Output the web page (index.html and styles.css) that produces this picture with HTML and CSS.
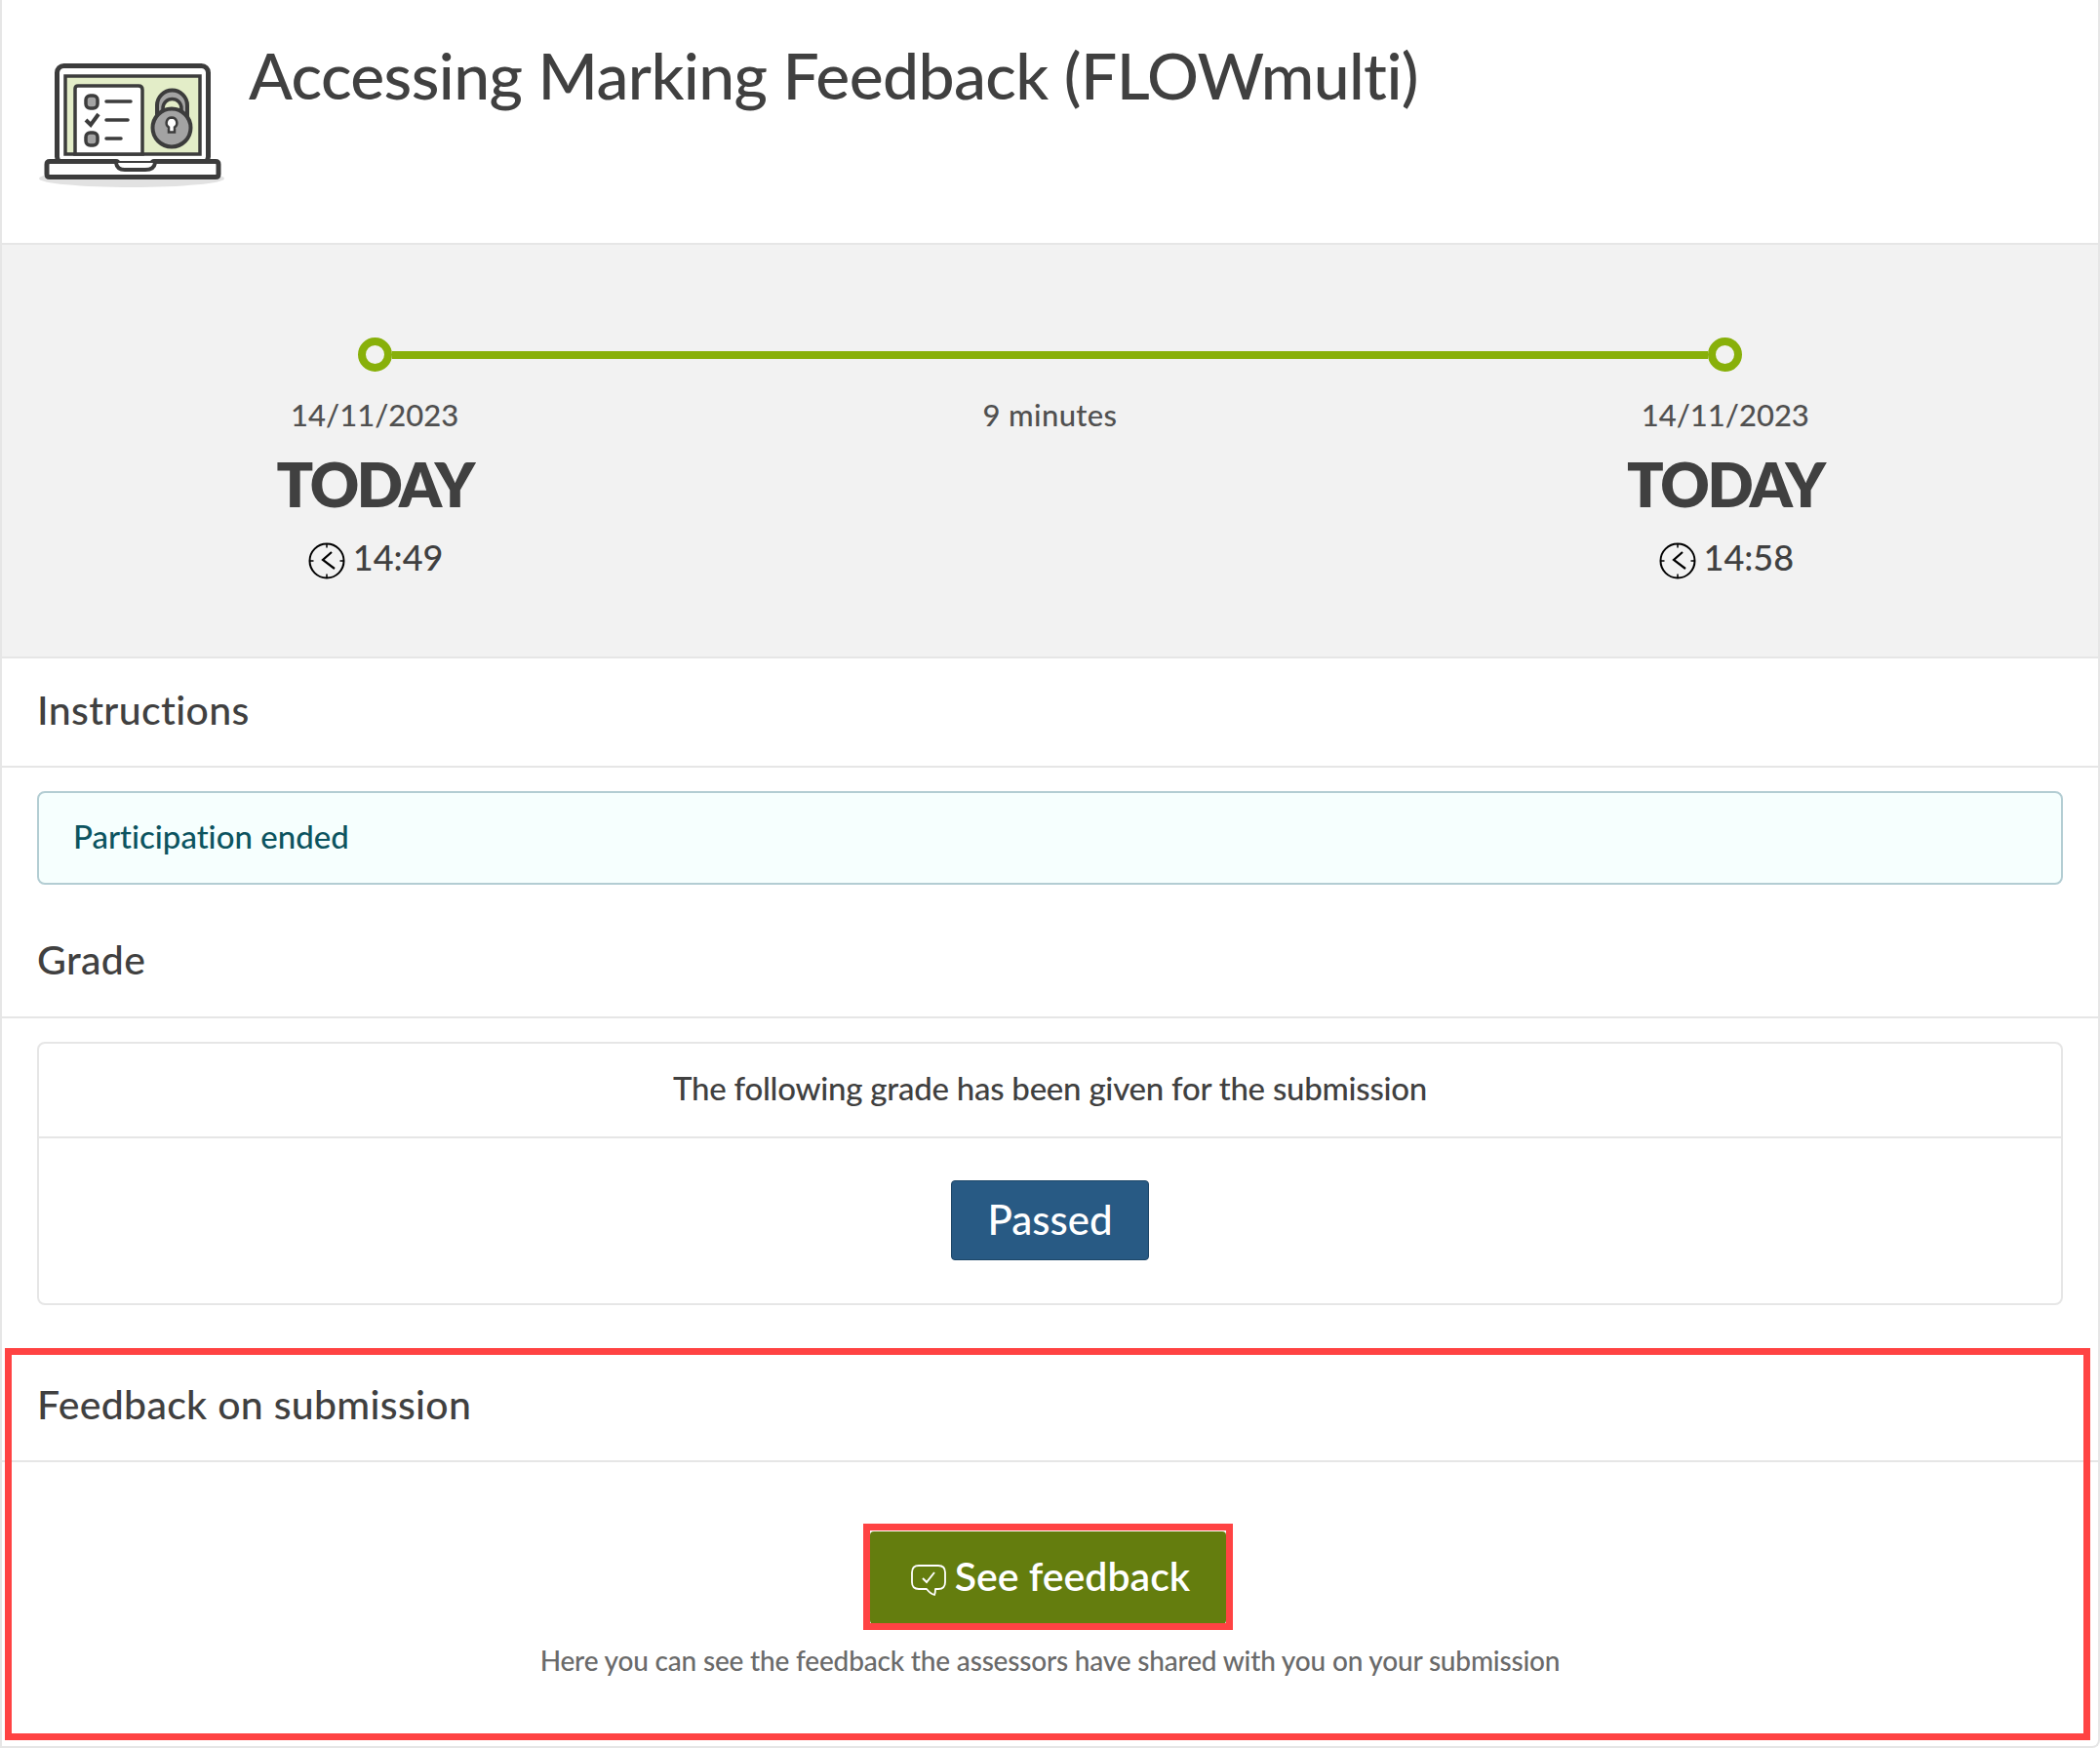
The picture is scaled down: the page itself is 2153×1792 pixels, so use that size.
FILE: index.html
```html
<!DOCTYPE html>
<html lang="en">
<head>
<meta charset="utf-8">
<title>Accessing Marking Feedback (FLOWmulti)</title>
<link rel="stylesheet" href="styles.css">
</head>
<body>
<main class="page">
  <header class="head">
    <svg class="head-icon" viewBox="40 60 190 135" width="190" height="135" aria-hidden="true">
      <ellipse cx="135" cy="183" rx="95" ry="9" fill="#e2e2e2"/>
      <rect x="58.500" y="67.500" width="155" height="100" rx="7" fill="#fff" stroke="#3c3c3c" stroke-width="5"/>
      <rect x="67" y="78" width="138" height="80" fill="#e3edc8" stroke="#3c3c3c" stroke-width="3.500"/>
      <path d="M77 158V91q0-3 3-3h62q4 0 4 4v66z" fill="#fff" stroke="#3c3c3c" stroke-width="3.500"/>
      <rect x="88" y="98" width="12" height="13" rx="4.500" fill="#a3a3a3" stroke="#3c3c3c" stroke-width="3.500"/>
      <rect x="88" y="136" width="12" height="13" rx="4.500" fill="#a3a3a3" stroke="#3c3c3c" stroke-width="3.500"/>
      <path d="M88 123l5 5 8-11" fill="none" stroke="#3c3c3c" stroke-width="4"/>
      <path d="M109 104h25M109 123h22M109 142h15" fill="none" stroke="#3c3c3c" stroke-width="3.500" stroke-linecap="round"/>
      <path d="M161 120V108a15.500 15.500 0 0 1 31 0v12z" fill="#a3a3a3" stroke="#3c3c3c" stroke-width="4"/>
      <path d="M167 114v-3a9.500 9.500 0 0 1 19 0v3z" fill="#e3edc8" stroke="#3c3c3c" stroke-width="3.500"/>
      <circle cx="176" cy="131" r="19.500" fill="#a3a3a3" stroke="#3c3c3c" stroke-width="4"/>
      <path d="M176 120.500a5.500 5.500 0 0 1 3 10v5h-6v-5a5.500 5.500 0 0 1 3-10z" fill="#fff" stroke="#3c3c3c" stroke-width="2.500"/>
      <path d="M51 165.500h68q2 0 3 3.500h33q1-3.500 3-3.500h63q3 0 3 3v10q0 3-3 3H51q-3 0-3-3v-10q0-3 3-3z" fill="#fff" stroke="#3c3c3c" stroke-width="5"/>
      <path d="M119 167q1 7 9 7h21q9 0 10-7" fill="#fff" stroke="#3c3c3c" stroke-width="4"/>
    </svg>
    <h1 class="title">Accessing Marking Feedback (FLOWmulti)</h1>
  </header>

  <section class="timeline">
    <div class="track">
      <span class="ring"></span>
      <span class="track-line"></span>
      <span class="ring"></span>
    </div>
    <div class="stamps">
      <div class="stamp">
        <div class="stamp-date">14/11/2023</div>
        <div class="stamp-day">TODAY</div>
        <div class="stamp-time">
          <svg class="clock" viewBox="0 0 38 38" width="38" height="38" aria-hidden="true"><use href="#clock-shape"/></svg>
          <span>14:49</span>
        </div>
      </div>
      <div class="stamp"><div class="stamp-date stamp-date-mid">9 minutes</div></div>
      <div class="stamp">
        <div class="stamp-date">14/11/2023</div>
        <div class="stamp-day">TODAY</div>
        <div class="stamp-time">
          <svg class="clock" viewBox="0 0 38 38" width="38" height="38" aria-hidden="true"><use href="#clock-shape"/></svg>
          <span>14:58</span>
        </div>
      </div>
    </div>
  </section>

  <h2 class="section-title section-title-first">Instructions</h2>
  <div class="section-body section-body-alert">
    <div class="alert">Participation ended</div>
  </div>

  <h2 class="section-title section-title-tight">Grade</h2>
  <div class="section-body section-body-card">
    <div class="card">
      <div class="card-head">The following grade has been given for the submission</div>
      <div class="card-body"><span class="badge">Passed</span></div>
    </div>
  </div>

  <h2 class="section-title section-title-feedback">Feedback on submission</h2>
  <div class="feedback">
    <a class="see-btn" href="#">
      <svg viewBox="0 0 38 34" width="38" height="34" aria-hidden="true">
        <path d="M9 2h20q7 0 7 7v10q0 7-7 7h-3q0 4 -1 6q-4-1-8-6H9q-7 0-7-7V9q0-7 7-7z" fill="none" stroke="#fff" stroke-width="1.800" stroke-linejoin="round"/>
        <path d="M13 15l4 4 8-10" fill="none" stroke="#fff" stroke-width="2"/>
      </svg>
      <span>See feedback</span>
    </a>
    <p class="help">Here you can see the feedback the assessors have shared with you on your submission</p>
  </div>

  <div class="mark mark-section"></div>
  <div class="mark mark-button"></div>
</main>
<svg class="defs" width="0" height="0" aria-hidden="true">
  <symbol id="clock-shape" viewBox="0 0 38 38">
    <circle cx="19" cy="19" r="17.500" fill="none" stroke="#000" stroke-width="2"/>
    <path d="M19 1.500v4M19 32.500v4M1.500 19h4M32.500 19h4" stroke="#000" stroke-width="1.500"/>
    <path d="M24 10l-9 8 12 9" fill="none" stroke="#000" stroke-width="2.200"/>
  </symbol>
</svg>
</body>
</html>
```
FILE: styles.css
```css
* { box-sizing: border-box; }
html, body { margin: 0; padding: 0; background: #fff; }
body {
  font-family: "Lato", "Noto Sans", sans-serif;
  font-variant-ligatures: none;
  color: #404040;
}
.page {
  position: relative;
  width: 2153px;
  height: 1792px;
  border: solid #e6e6e6;
  border-width: 0 2px 2px 2px;
  border-bottom-right-radius: 8px;
  overflow: hidden;
}
.defs { position: absolute; }

.head {
  display: flex;
  align-items: flex-start;
  height: 251px;
  padding: 60px 0 0 38px;
  border-bottom: 2px solid #e6e6e6;
}
.head-icon { flex: none; }
.title {
  margin: -33px 0 0 25px;
  font-size: 66px;
  line-height: 100px;
  font-weight: 500;
  letter-spacing: -0.6px;
}

.timeline {
  height: 424px;
  padding: 0 36px;
  background: #f2f2f2;
  border-bottom: 2px solid #e6e6e6;
}
.track {
  display: flex;
  align-items: center;
  padding: 95px 329px 0;
}
.ring {
  flex: none;
  width: 35px;
  height: 35px;
  border: 8px solid #88b00a;
  border-radius: 50%;
}
.track-line { flex: 1; height: 8px; background: #88b00a; }
.stamps {
  display: grid;
  grid-template-columns: repeat(3, 1fr);
  margin-top: 22px;
}
.stamp { text-align: center; }
.stamp-date { font-size: 31px; line-height: 44px; color: #505050; font-weight: 500; }
.stamp-date-mid { letter-spacing: 0.35px; }
.stamp-day {
  font-size: 62px;
  line-height: 92px;
  font-weight: 800;
  letter-spacing: -2.4px;
  margin-top: 3px;
}
.stamp-time {
  display: flex;
  justify-content: center;
  align-items: center;
  gap: 8px;
  padding-left: 2px;
  font-size: 36px;
  line-height: 58px;
  font-weight: 500;
}
.clock { position: relative; top: 4px; }

.section-title {
  margin: 0;
  height: 112px;
  padding: 28px 36px 0;
  font-size: 41px;
  line-height: 50px;
  font-weight: 500;
  letter-spacing: 0.35px;
  border-bottom: 2px solid #e6e6e6;
}
.section-title-tight { padding-top: 27px; }
.section-title-feedback { height: 116px; padding-top: 32px; letter-spacing: 0.3px; }

.section-body { padding: 24px 36px 0; }
.section-body-alert { height: 145px; }
.section-body-card { height: 339px; }
.alert {
  height: 96px;
  padding: 0 35px;
  font-size: 33px;
  line-height: 88px;
  font-weight: 500;
  color: #0c5460;
  background: #f6fffe;
  border: 2px solid #b3cdd3;
  border-radius: 8px;
}
.card {
  height: 270px;
  border: 2px solid #e6e6e6;
  border-radius: 8px;
}
.card-head {
  height: 97px;
  font-size: 33px;
  line-height: 90px;
  font-weight: 500;
  letter-spacing: -0.25px;
  text-align: center;
  border-bottom: 2px solid #e6e6e6;
}
.card-body { display: flex; justify-content: center; padding-top: 43px; }
.badge {
  width: 203px;
  height: 82px;
  font-size: 42px;
  line-height: 78px;
  font-weight: 500;
  text-align: center;
  color: #fff;
  background: #285a84;
  border: 1px solid #1d4668;
  border-radius: 4px;
}

.feedback {
  display: flex;
  flex-direction: column;
  align-items: center;
  padding-top: 71px;
}
.see-btn {
  display: flex;
  align-items: center;
  justify-content: center;
  gap: 8px;
  width: 365px;
  height: 95px;
  margin-right: 4px;
  padding: 0 0 5px 4px;
  font-size: 41px;
  font-weight: 600;
  color: #fff;
  text-decoration: none;
  background: #647d0e;
  border-radius: 4px;
}
.see-btn svg { position: relative; top: 5px; }
.help {
  margin: 15px 0 0;
  font-size: 28px;
  line-height: 44px;
  font-weight: 500;
  letter-spacing: -0.18px;
  color: #6a6a6a;
}

.mark { position: absolute; border: 7px solid #ff4343; }
.mark-section { left: 3px; top: 1382px; width: 2138px; height: 402px; }
.mark-button { left: 883px; top: 1562px; width: 379px; height: 109px; }
```
